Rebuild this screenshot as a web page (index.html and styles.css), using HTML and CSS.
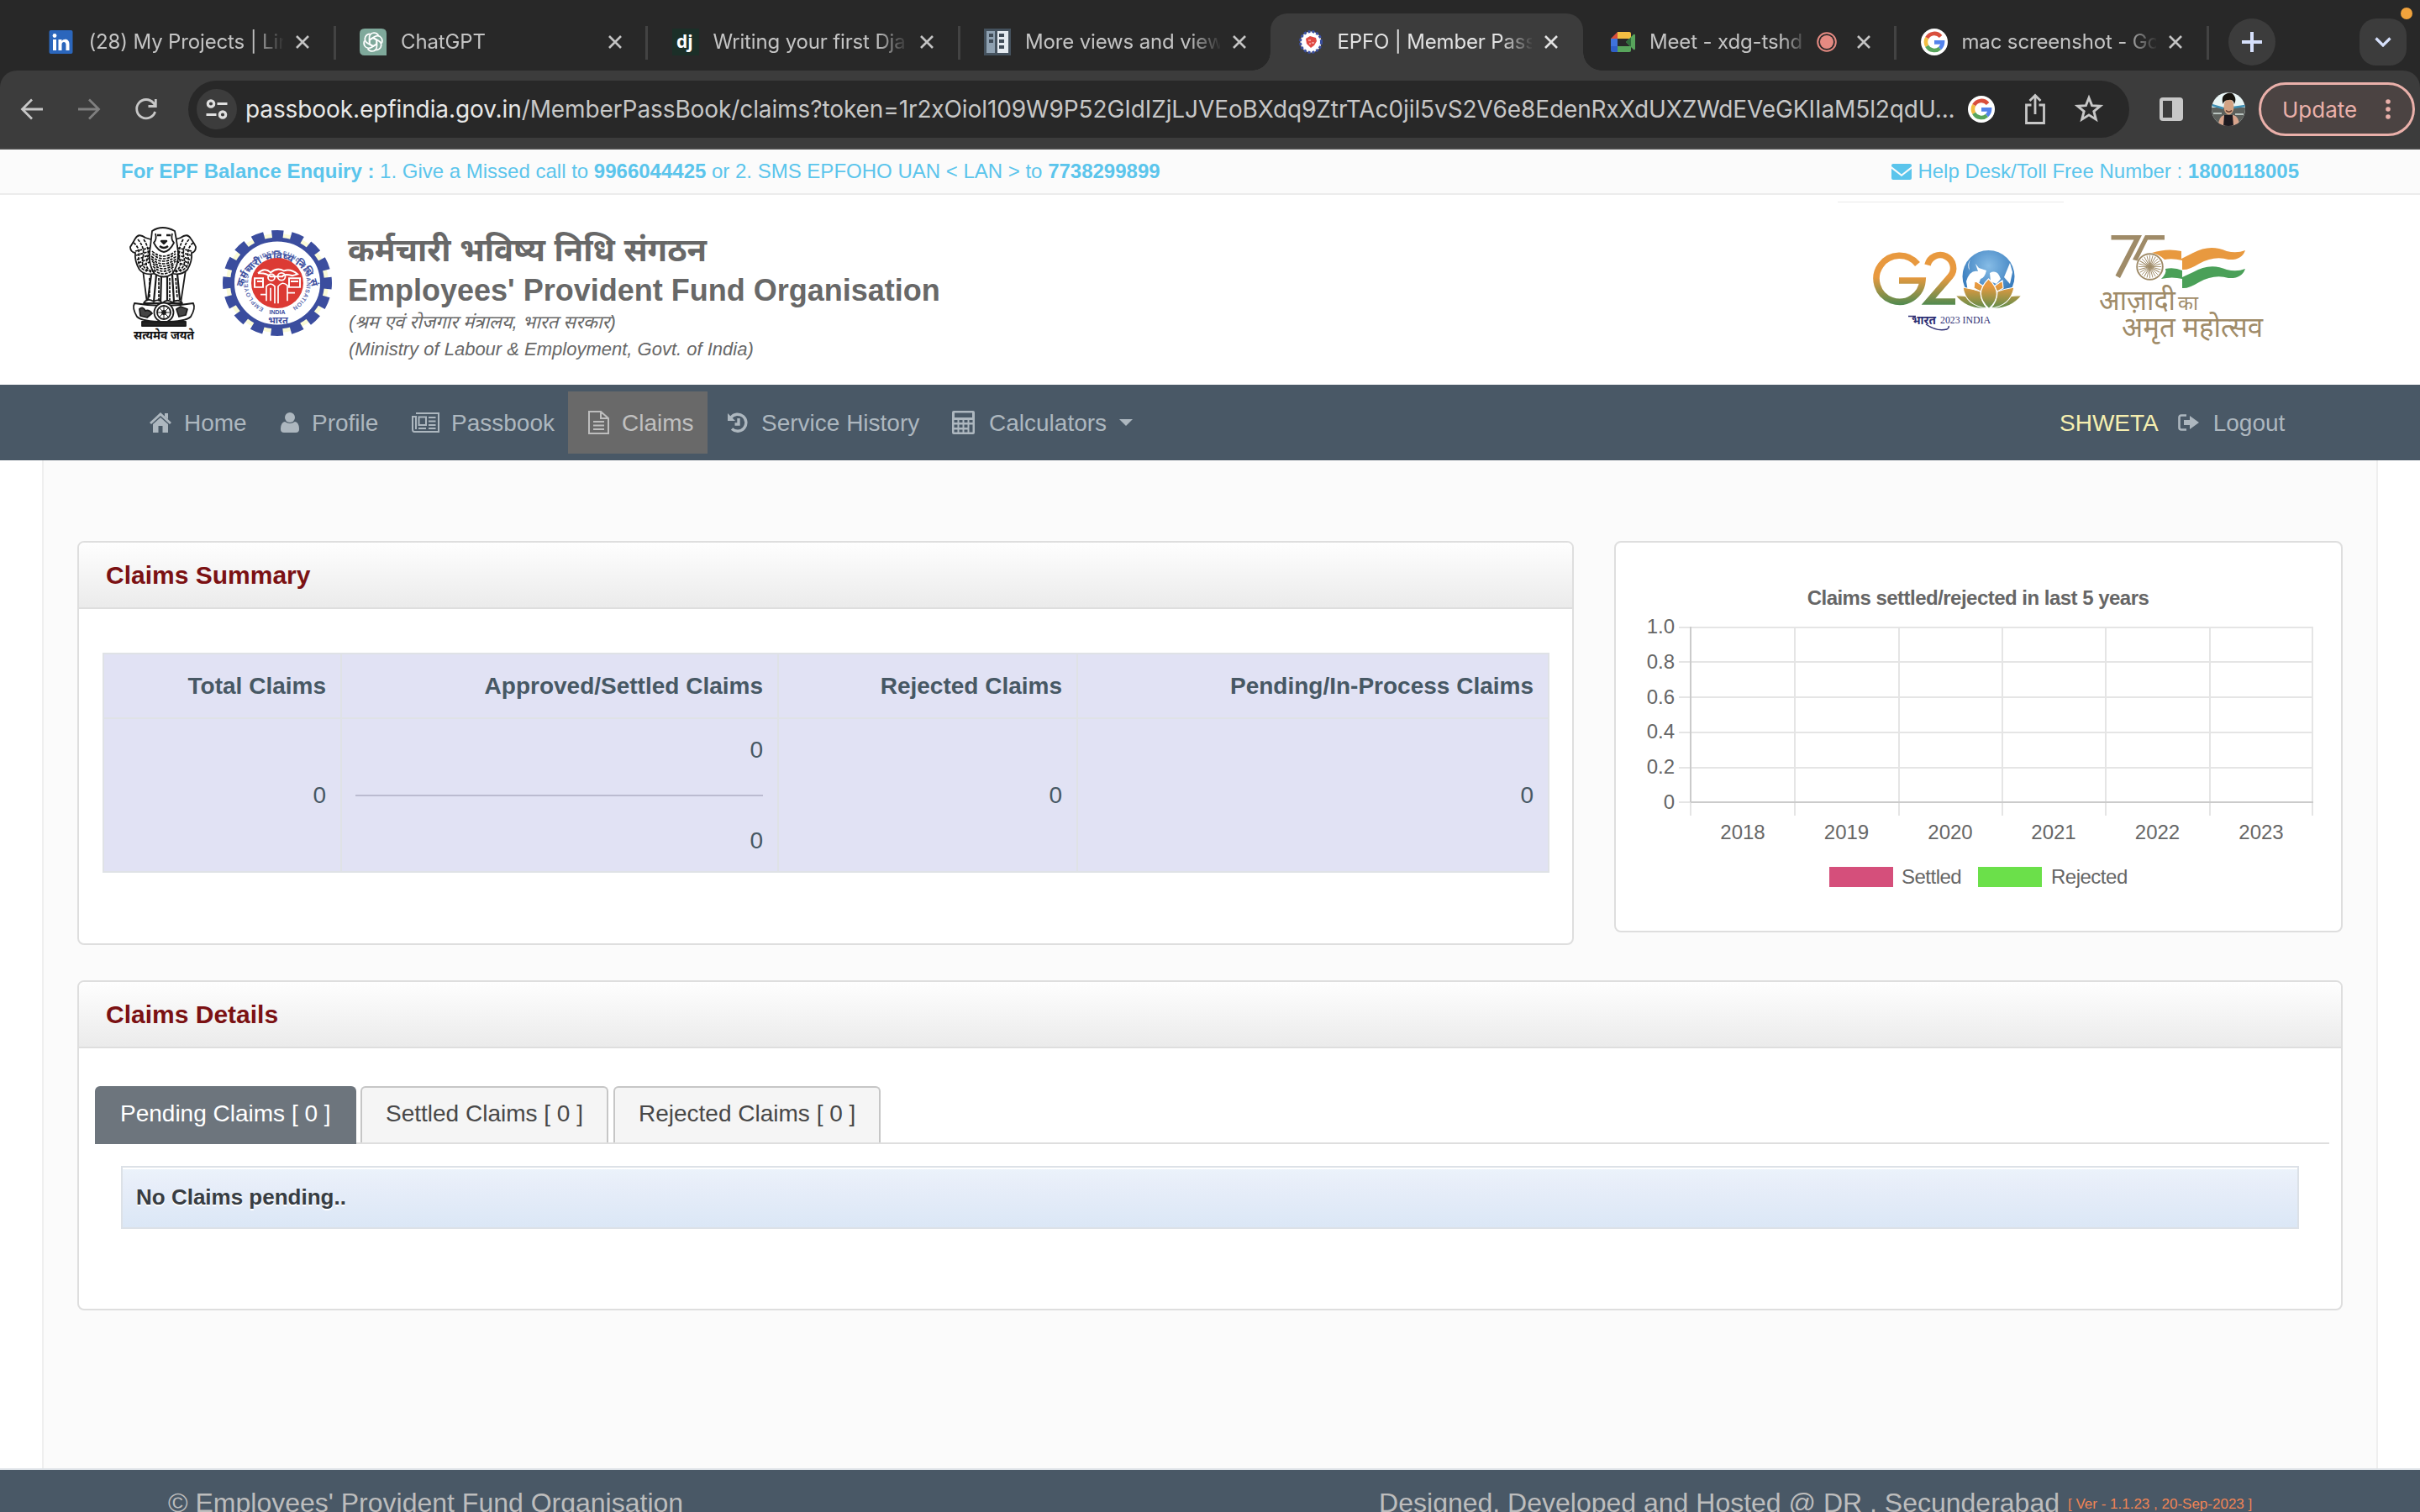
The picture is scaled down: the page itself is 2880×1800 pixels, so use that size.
FILE: index.html
```html
<!DOCTYPE html>
<html lang="en">
<head>
<meta charset="utf-8">
<title>EPFO | Member Passbook</title>
<link rel="stylesheet" href="styles.css">
</head>
<body>
<svg width="0" height="0" class="defs">
  <symbol id="close" viewBox="0 0 16 16"><path d="M1 1L15 15M15 1L1 15" stroke="currentColor" stroke-width="2.6" fill="none"/></symbol>
  <symbol id="google" viewBox="0 0 32 32"><circle cx="16" cy="16" r="16" fill="#fff"/><g fill="none" stroke-width="4.6"><path d="M23.6 9.4A10 10 0 0 0 7.2 11.2" stroke="#d94f3d"/><path d="M7.2 11.2A10 10 0 0 0 7.2 20.8" stroke="#f2be42"/><path d="M7.2 20.8A10 10 0 0 0 22.6 23.5" stroke="#58a55c"/><path d="M22.6 23.5A10 10 0 0 0 26 16.4H16" stroke="#5383ec"/></g></symbol>
</svg>

<header class="tabstrip">
  <div class="tab tab-sep">
    <svg class="fav" viewBox="0 0 32 32"><rect x="1.500" y="2" width="28" height="28" rx="2" fill="#2b66bc"/><path d="M6 13h4v13h-4zM12.500 13h4v2c2-3.400 9-3.400 9 3.500V26h-4v-7c0-4-5-4-5 0v7h-4z" fill="#fff"/><circle cx="8" cy="8.500" r="2.400" fill="#fff"/></svg>
    <span class="tab-title"><span>(28) My Projects | Lin</span></span>
    <svg class="x"><use href="#close"/></svg>
  </div>
  <div class="tab tab-sep">
    <svg class="fav" viewBox="0 0 32 32"><path d="M6 0H26Q32 0 32 6V32H6Q0 32 0 26V6Q0 0 6 0z" fill="#7fa99b"/><g fill="none" stroke="#fff" stroke-width="1.700"><path id="petal" d="M16 11.200L20.500 13.800V20.500Q20.500 26.500 15 27Q11.500 27 9.600 24"/><use href="#petal" transform="rotate(60 16 16)"/><use href="#petal" transform="rotate(120 16 16)"/><use href="#petal" transform="rotate(180 16 16)"/><use href="#petal" transform="rotate(240 16 16)"/><use href="#petal" transform="rotate(300 16 16)"/></g></svg>
    <span class="tab-title"><span>ChatGPT</span></span>
    <svg class="x"><use href="#close"/></svg>
  </div>
  <div class="tab tab-sep">
    <svg class="fav" viewBox="0 0 32 32"><rect width="32" height="32" fill="#1b2f28"/><text x="5" y="23" class="dj">dj</text></svg>
    <span class="tab-title"><span>Writing your first Dja</span></span>
    <svg class="x"><use href="#close"/></svg>
  </div>
  <div class="tab">
    <svg class="fav" viewBox="0 0 32 32"><rect width="32" height="32" fill="#45525e"/><rect x="3" y="3" width="10" height="26" fill="#8fa1b1"/><rect x="16" y="3" width="13" height="26" fill="#e4eaf0"/><path d="M6 6h5v4H6zM6 13h5v4H6zM18 6h6v4h-6zM18 13h6v4h-6zM18 20h6v4h-6z" fill="#3f4b57"/></svg>
    <span class="tab-title"><span>More views and view</span></span>
    <svg class="x"><use href="#close"/></svg>
  </div>
  <div class="tab tab-active">
    <svg class="fav" viewBox="-1 0 32 32"><circle cx="16" cy="16" r="12.500" fill="#fff" stroke="#3b4fa0" stroke-width="3" stroke-dasharray="3 2"/><path d="M10 12L15 9L22 11L23 15L20 20L16 23L11 18z" fill="#e04a44"/><path d="M13 14h3M17 17h3M14 18h2" stroke="#f7b4b0" stroke-width="1.500"/></svg>
    <span class="tab-title"><span>EPFO | Member Pass</span></span>
    <svg class="x"><use href="#close"/></svg>
  </div>
  <div class="tab tab-sep">
    <svg class="fav" viewBox="-3 0 32 32"><path d="M0 12L8 4V12z" fill="#d94f3d"/><path d="M8 4H22Q24 4 24 6V12H8z" fill="#f2be42"/><path d="M0 12H8V21H0z" fill="#3f73dc"/><path d="M0 21H8V28H2Q0 28 0 26z" fill="#2f5fc8"/><path d="M8 21H24V26Q24 28 22 28H8z" fill="#58a55c"/><path d="M18 16L27 7Q29 6 29 8V24Q29 26 27 25z" fill="#58a55c"/><path d="M18 16L24 10.500V21.500z" fill="#2f6b3b"/></svg>
    <span class="tab-title"><span>Meet - xdg-tshd</span></span>
    <svg class="rec" viewBox="0 0 24 24"><circle cx="12" cy="12" r="10.800" fill="none" stroke="#e58a82" stroke-width="2"/><circle cx="12" cy="12" r="8" fill="#e58a82"/></svg>
    <svg class="x"><use href="#close"/></svg>
  </div>
  <div class="tab tab-sep">
    <svg class="fav"><use href="#google"/></svg>
    <span class="tab-title"><span>mac screenshot - Go</span></span>
    <svg class="x"><use href="#close"/></svg>
  </div>
  <div class="newtab"><svg viewBox="0 0 24 24"><path d="M12 0V24M0 12H24" stroke="#d6e0fb" stroke-width="4"/></svg></div>
  <div class="tabsearch"><svg viewBox="0 0 20 12"><path d="M1.500 1.500L10 10L18.500 1.500" fill="none" stroke="#d6e0fb" stroke-width="3.200"/></svg></div>
  <i class="mic-dot"></i>
</header>

<div class="toolbar-bg">
<div class="toolbar">
  <div class="navbtns">
    <svg viewBox="0 0 28 28"><path d="M14 2.500L2.500 14L14 25.500M3 14H27" fill="none" stroke="#c7c7c7" stroke-width="2.800"/></svg>
    <svg viewBox="0 0 28 28"><path d="M14 2.500L25.500 14L14 25.500M1 14H25" fill="none" stroke="#7f7f7f" stroke-width="2.800"/></svg>
    <svg viewBox="0 0 28 28"><path d="M24.600 17A11.200 11.200 0 1 1 22.500 6.500L25 9.500M25.300 2V10.500H16.500" fill="none" stroke="#c7c7c7" stroke-width="2.800"/></svg>
  </div>
  <div class="omnibox">
    <span class="site"><svg viewBox="0 0 26 24"><g fill="none" stroke="#dfdfdf" stroke-width="3.200"><circle cx="6" cy="5.500" r="3.700"/><path d="M13.500 5.500H25.500M0.500 18.500H12.500"/><circle cx="20" cy="18.500" r="3.700"/></g></svg></span>
    <span class="url"><b>passbook.epfindia.gov.in</b><span>/MemberPassBook/claims?token=1r2xOiol109W9P52GIdIZjLJVEoBXdq9ZtrTAc0jil5vS2V6e8EdenRxXdUXZWdEVeGKIIaM5l2qdU...</span></span>
    <svg class="og"><use href="#google"/></svg>
    <svg class="share" viewBox="0 0 26 38"><path d="M8.500 14H2.500V35.500H23.500V14H17.500M13 25V3M6.500 9L13 2.500L19.500 9" fill="none" stroke="#c7c7c7" stroke-width="2.800"/></svg>
    <svg class="star" viewBox="0 0 32 32"><path d="M16 4L19.200 12.100L28 12.700L21.200 18.300L23.400 26.800L16 22.100L8.600 26.800L10.800 18.300L4 12.700L12.800 12.100z" fill="none" stroke="#c7c7c7" stroke-width="2.600"/></svg>
  </div>
  <svg class="panel" viewBox="0 0 28 28"><rect width="28" height="28" rx="4" fill="#c7c7c7"/><rect x="4" y="4" width="11" height="20" fill="#3c3c3c"/></svg>
  <svg class="avatar" viewBox="0 0 40 40"><clipPath id="av"><circle cx="20" cy="20" r="20"/></clipPath><g clip-path="url(#av)"><rect width="40" height="40" fill="#e9f5f5"/><rect y="18" width="40" height="22" fill="#5c605c"/><path d="M0 15L14 19M26 18L40 16" stroke="#3d8fb4" stroke-width="2.500"/><path d="M2 25H12M28 26H38" stroke="#b9c4c0" stroke-width="2"/><path d="M8 40Q8 29 15 27H26Q33 29 33 40z" fill="#d8a48c"/><path d="M15 27H25L26 40H14z" fill="#1d1a20"/><ellipse cx="20.500" cy="17" rx="6" ry="9.500" fill="#d3a384"/><path d="M13.500 14Q11 4 17 2Q24-2 27.500 5Q29.500 9 27 14Q26 8 20 9Q15 9 13.500 14z" fill="#17140f"/><path d="M17 21.500Q20.500 25 24 21.500" stroke="#5b3a30" stroke-width="1.500" fill="none"/></g></svg>
  <div class="update"><span>Update</span><svg viewBox="0 0 6 24"><circle cx="3" cy="3" r="2.800"/><circle cx="3" cy="12" r="2.800"/><circle cx="3" cy="21" r="2.800"/></svg></div>
</div>
</div>

<div class="infobar">
  <div class="enquiry"><b>For EPF Balance Enquiry :</b> 1. Give a Missed call to <b>9966044425</b> or 2. SMS EPFOHO UAN &lt; LAN &gt; to <b>7738299899</b></div>
  <div class="helpdesk"><svg viewBox="0 0 24 19"><path d="M2 0H22Q24 0 24 2V3L12 12.500L0 3V2Q0 0 2 0zM0 5.800L12 15L24 5.800V17Q24 19 22 19H2Q0 19 0 17z" fill="#5bc5ec"/></svg><span>Help Desk/Toll Free Number : <b>1800118005</b></span></div>
</div>

<div class="brand">
  <svg class="emblem" viewBox="0 0 84 138">
    <g fill="#fff" stroke="#1a1a1a" stroke-width="1.800" stroke-linejoin="round">
      <path d="M17 52L22 92H62L68 52z" fill="#fff"/>
      <path d="M20 14Q12 8 8 15Q4 22 2 25Q2 31 8 32Q7 42 13 52Q20 60 33 56V18z"/>
      <path d="M62 14Q70 8 74 15Q79 22 80 25Q80 31 75 32Q76 42 70 52Q62 60 50 56V18z"/>
      <path d="M28 6Q40-2 55 6Q57 16 58 24Q62 44 52 57Q42 64 31 57Q22 44 26 24z"/>
      <path d="M32 9Q34 16 30 20Q35 30 42 31Q49 30 54 20Q50 16 52 9"/>
      <path d="M34 11H39M45 11H50M39 18H45L42 21zM37 24Q42 28 47 24" stroke-width="2.400"/>
      <path d="M27 58L23 88M33 58L30 90M39 60L38 92M46 60L46 92M52 58L54 90M58 57L61 88" fill="none" stroke-width="2.200"/>
      <path d="M18 92Q22 85 30 90Q36 86 40 92Q46 86 52 91Q60 86 64 92z"/>
      <path d="M7 92Q42 98 77 92Q80 98 74 108Q68 114 42 114Q16 114 10 108Q4 98 7 92z"/>
      <circle cx="42" cy="103" r="11.500"/><circle cx="42" cy="103" r="8"/><circle cx="42" cy="103" r="2" fill="#1a1a1a"/>
      <path d="M42 95V111M34 103H50M36.300 97.300L47.700 108.700M47.700 97.300L36.300 108.700" stroke-width="1"/>
      <path d="M13 99Q17 95 20 101Q24 99 28 104L22 109L14 107zM57 99L62 96L70 99L68 106L60 108z" fill="#444"/>
      <rect x="16" y="114" width="52" height="5" fill="#222"/>
    </g>
    <g fill="none" stroke="#111" stroke-width="1.700" stroke-dasharray="3.500 1.300">
      <path d="M6 20Q14 26 12 38T22 54M11 16Q20 26 17 38T27 55M18 16Q26 28 22 40T31 55M77 20Q69 26 71 38T61 54M72 16Q63 26 66 38T56 55M65 16Q58 28 61 40T52 55"/>
      <path d="M28 30Q41 42 56 30M27 36Q41 48 57 36M28 42Q41 54 56 42M29 48Q41 60 54 48M8 30L26 26M10 40L26 34M14 48L27 42M58 26L75 30M58 34L73 40M57 42L69 48"/>
      <path d="M28 33Q41 45 56 33M27 39Q41 51 57 39M29 45Q41 57 55 45M9 35L26 30M12 44L26 38M58 30L74 35M58 38L71 44M30 52Q41 62 53 52M25 62V86M36 62V88M49 62V88M56 62L58 86"/>
    </g>
    <text x="42" y="134.500" text-anchor="middle" class="satya" textLength="72" lengthAdjust="spacingAndGlyphs">सत्यमेव जयते</text>
  </svg>
  <svg class="epfo" viewBox="-66 -65 132 130" preserveAspectRatio="none">
    <circle r="61" fill="#fbfbd8"/>
    <circle r="59" fill="none" stroke="#3b4d9e" stroke-width="12" stroke-dasharray="14 9.170" stroke-dashoffset="7" transform="rotate(-90)"/>
    <circle r="53.500" fill="#fff" stroke="#3b4d9e" stroke-width="5"/>
    <defs><path id="ring1" d="M-41 6A41.500 41.500 0 0 1 41 6"/><path id="ring2" d="M-15 31.500A35 35 0 1 1 15 31.500"/></defs>
    <text class="r1"><textPath href="#ring1" textLength="138" startOffset="1">कर्मचारी भविष्य निधि संगठन</textPath></text>
    <text class="r2"><textPath href="#ring2" textLength="184" startOffset="1">EMPLOYEES PROVIDENT FUND ORGANISATION</textPath></text>
    <circle r="31" fill="#dc3a34"/>
    <path d="M-27-6H-17V5H-27zM14-6H27V5H14zM-24-2H-18M16-2H25M-23-12Q-15-20-8-13Q0-20 8-15Q16-18 24-11L18-9Q8-12 6-8H-8Q-14-13-23-12" fill="none" stroke="#fff" stroke-width="2"/>
    <circle cx="-7" cy="-7" r="4" fill="none" stroke="#fff" stroke-width="1.800"/><circle cx="5" cy="-8" r="4.500" fill="none" stroke="#fff" stroke-width="1.800"/>
    <path d="M-13 22V4Q-8-2-3 4V25M1 25V4Q6-3 12 3V22M-20 14H-13M12 12H21M-8 6V22" fill="none" stroke="#fff" stroke-width="1.700"/>
    <text class="r3" x="0" y="38" text-anchor="middle">INDIA</text><text class="r4" x="1" y="49.500" text-anchor="middle">भारत</text>
  </svg>
  <div class="names">
    <div class="n1"><span>कर्मचारी भविष्य निधि संगठन</span></div>
    <div class="n2"><span>Employees' Provident Fund Organisation</span></div>
    <div class="n3"><span>(श्रम एवं रोजगार मंत्रालय, भारत सरकार)</span></div>
    <div class="n4"><span>(Ministry of Labour &amp; Employment, Govt. of India)</span></div>
  </div>
  <svg class="g20" viewBox="2187 232 270 226">
    <defs>
      <linearGradient id="gg" x1="0" y1="302" x2="0" y2="364" gradientUnits="userSpaceOnUse"><stop offset=".45" stop-color="#e8993f"/><stop offset="1" stop-color="#4b8a50"/></linearGradient>
      <linearGradient id="lg" x1="0" y1="334" x2="0" y2="367" gradientUnits="userSpaceOnUse"><stop offset=".2" stop-color="#e8993f"/><stop offset="1" stop-color="#5f8e4c"/></linearGradient>
      <radialGradient id="globe" cx=".5" cy=".3" r=".65"><stop offset="0" stop-color="#86bce6"/><stop offset="1" stop-color="#2f74b8"/></radialGradient>
    </defs>
    <path d="M2187 240.500H2456" stroke="#e9e9e9"/>
    <g fill="none" stroke="url(#gg)" stroke-width="7.600">
      <path d="M2282 314.500A27.500 27.500 0 1 0 2288 334H2260"/>
      <path d="M2294 315.500A15.500 15.500 0 1 1 2321 329L2295 359H2327"/>
    </g>
    <circle cx="2366.500" cy="329" r="31" fill="url(#globe)"/>
    <path d="M2340 335Q2344 321 2354 323L2351 314L2355 319L2364 322Q2362 331 2357 332L2352 346L2342 347zM2368 325Q2377 320 2381 332L2376 338L2369 335zM2385 330L2392 313L2395 324L2392 338zM2345 309Q2342 314 2344 322Q2340 315 2345 309z" fill="#fff"/>
    <g fill="url(#lg)" stroke="#fff" stroke-width="1.200">
      <path d="M2327 352Q2350 350 2366 367Q2342 370 2327 352zM2406 352Q2383 350 2367 367Q2391 370 2406 352z"/>
      <path d="M2350 334L2361 341L2357 347L2349 343zM2383 334L2373 341L2377 347L2384 343z"/>
      <path d="M2336 342Q2348 344 2357 347Q2357 358 2365 367Q2339 364 2336 342zM2397 342Q2386 344 2377 347Q2377 358 2369 367Q2393 364 2397 342z"/>
      <path d="M2366.500 332Q2386 350 2367 367.500Q2348 350 2366.500 332z"/>
    </g>
    <g fill="#2f2f74"><text class="bh" x="2275" y="386" textLength="29" lengthAdjust="spacingAndGlyphs">भारत</text><text class="yr" x="2309" y="385" textLength="60" lengthAdjust="spacingAndGlyphs">2023 INDIA</text></g>
    <path d="M2271 376.500H2280M2292 386Q2305 395 2317 392Q2320 390 2319 388" fill="none" stroke="#2f2f74" stroke-width="1.500"/>
  </svg>
  <svg class="azadi" viewBox="2490 232 210 226">
    <path d="M2512.500 280H2549L2523 331L2517.500 328L2539.500 285.500H2512.500zM2553 280H2576V285.500H2556L2543.500 310.500L2538 309z" fill="#9f8b68"/>
    <path d="M2561 301Q2579 295 2596 299V308L2610 301Q2630 290 2650 299Q2662 302 2672 298Q2668 310 2652 309Q2635 304 2617 314Q2604 322 2597 321V310Q2585 307 2576 309Q2570 303 2561 301z" fill="#e8993f"/>
    <path d="M2572 332Q2579 325 2577 320Q2588 318 2597 322V330L2610 324Q2630 312 2650 321Q2662 324 2672 320Q2668 332 2652 331Q2635 326 2617 336Q2604 344 2597 343V332Q2585 329 2572 332z" fill="#4aa058"/>
    <circle cx="2558.500" cy="317.500" r="15.300" fill="#fff" stroke="#9f8b68" stroke-width="1.900"/>
    <g stroke="#9f8b68" stroke-width=".9"><path id="sp" d="M2558.500 304V331M2545 317.500H2572M2549 308L2568 327M2568 308L2549 327"/><use href="#sp" transform="rotate(15 2558.500 317.500)"/><use href="#sp" transform="rotate(30 2558.500 317.500)"/></g>
    <g fill="#9f8b68" class="az"><text x="2498" y="369" textLength="91" lengthAdjust="spacingAndGlyphs" class="a1">आज़ादी</text><text x="2592" y="369" textLength="24" lengthAdjust="spacingAndGlyphs" class="a2">का</text><text x="2525" y="401" textLength="168" lengthAdjust="spacingAndGlyphs" class="a1">अमृत महोत्सव</text></g>
  </svg>
</div>

<nav class="mainnav">
  <a class="home"><svg width="26" height="24" viewBox="0 0 26 24"><path d="M13 0L26 12L24 14L13 4L2 14L0 12L5 7.500L13 0zM18 1H22V8L18 4.500zM4 14L13 6L22 14V24H15.500V16H10.500V24H4z"/></svg><span>Home</span></a>
  <a class="profile"><svg width="22" height="24" viewBox="0 0 22 24"><circle cx="11" cy="6" r="6"/><path d="M5 11Q11 15 17 11Q22 12 22 20Q22 24 18 24H4Q0 24 0 20Q0 12 5 11z"/></svg><span>Profile</span></a>
  <a class="passbook"><svg width="33" height="24" viewBox="0 0 33 24"><path d="M5 1H32V23H3Q1 23 1 20V5H5V20M8.500 5.500H17V15H8.500zM20 6H28.500M20 10.500H28.500M20 15H28.500M8 19H17M20 19H28.500" fill="none" stroke="#adb7bf" stroke-width="2"/></svg><span>Passbook</span></a>
  <a class="claims active"><svg width="25" height="28" viewBox="0 0 25 28"><path d="M1 1H15L24 9V27H1zM15 1V9H24M6 13H19M6 17.500H19M6 22H19" fill="none" stroke="#bdbdbd" stroke-width="2"/></svg><span>Claims</span></a>
  <a class="service"><svg width="25" height="25" viewBox="0 0 25 25"><path d="M4 6A10 10 0 1 1 5 19.500M13 7V14H8.500" fill="none" stroke="#adb7bf" stroke-width="3.400"/><path d="M0 1V10H9z"/></svg><span>Service History</span></a>
  <a class="calc"><svg width="27" height="28" viewBox="0 0 27 28"><path fill-rule="evenodd" d="M2 0H25Q27 0 27 2V26Q27 28 25 28H2Q0 28 0 26V2Q0 0 2 0zM3 2.500V8H24V2.500zM2.500 11V14H6.500V11zM8.500 11V14H12.500V11zM14.500 11V14H18.500V11zM20.500 11V14H24.500V11zM2.500 16.500V20H6.500V16.500zM8.500 16.500V20H12.500V16.500zM14.500 16.500V20H18.500V16.500zM20.500 16.500V25.500H24.500V16.500zM2.500 22.500V25.500H6.500V22.500zM8.500 22.500V25.500H12.500V22.500zM14.500 22.500V25.500H18.500V22.500z"/></svg><span>Calculators</span><i class="caret"></i></a>
  <span class="user">SHWETA</span>
  <a class="logout"><svg width="25" height="20" viewBox="0 0 25 20"><path d="M10 1.500H4Q1.500 1.500 1.500 4V16Q1.500 18.500 4 18.500H10" fill="none" stroke="#adb7bf" stroke-width="2.600"/><path d="M7 7H14V2L25 10L14 18V13H7z"/></svg><span>Logout</span></a>
</nav>

<main class="page">
  <div class="row">
    <section class="card summary">
      <h2><span>Claims Summary</span></h2>
      <table>
        <colgroup><col class="c1"><col class="c2"><col class="c3"><col class="c4"></colgroup>
        <tr class="head"><th><span>Total Claims</span></th><th><span>Approved/Settled Claims</span></th><th><span>Rejected Claims</span></th><th><span>Pending/In-Process Claims</span></th></tr>
        <tr class="vals"><td>0</td><td><div>0</div><hr><div>0</div></td><td>0</td><td>0</td></tr>
      </table>
    </section>
    <section class="card chart">
      <svg viewBox="-1 0 863 462">
        <g fill="none" stroke="#e5e5e5" stroke-width="2">
          <path d="M74 101H829M74 142H829M74 184H829M74 226H829M74 268H829M74 309H88"/>
          <path d="M88 310V325M212 100V325M336 100V325M459 100V325M582 100V325M706 100V325M828 100V325"/>
        </g>
        <path d="M88 100V309M88 309H829" fill="none" stroke="#cbcbcb" stroke-width="2"/>
        <g class="lab">
          <text x="430" y="73.500" text-anchor="middle" class="ct">Claims settled/rejected in last 5 years</text>
          <g text-anchor="end"><text x="69" y="108">1.0</text><text x="69" y="150">0.8</text><text x="69" y="192">0.6</text><text x="69" y="233">0.4</text><text x="69" y="275">0.2</text><text x="69" y="317">0</text></g>
          <g text-anchor="middle"><text x="150" y="352.500">2018</text><text x="273.500" y="352.500">2019</text><text x="397" y="352.500">2020</text><text x="520" y="352.500">2021</text><text x="643.500" y="352.500">2022</text><text x="767" y="352.500">2023</text></g>
          <text x="339" y="405.500" class="lg">Settled</text><text x="517" y="405.500" class="lg">Rejected</text>
        </g>
        <rect x="253" y="386" width="76" height="24" fill="#d54f7b"/><rect x="430" y="386" width="76" height="24" fill="#6be04a"/>
      </svg>
    </section>
  </div>
  <section class="card details">
    <h2><span>Claims Details</span></h2>
    <div class="pills"><a class="on"><span>Pending Claims [ 0 ]</span></a><a><span>Settled Claims [ 0 ]</span></a><a><span>Rejected Claims [ 0 ]</span></a></div>
    <div class="notice"><span>No Claims pending..</span></div>
  </section>
</main>

<footer class="foot"><span class="copy">© Employees' Provident Fund Organisation</span><span class="dev">Designed, Developed and Hosted @ DR , Secunderabad</span><span class="ver">[ Ver - 1.1.23 , 20-Sep-2023 ]</span></footer>
</body>
</html>
```
FILE: styles.css
```css
* { box-sizing: border-box; }
body { margin: 0; width: 2880px; height: 1800px; overflow: hidden; background: #fff; font-family: "Liberation Sans", "Noto Sans Devanagari", "Noto Sans", sans-serif; display: flex; flex-direction: column; }
body > * { flex: none; }
.defs { position: absolute; }
svg { display: block; flex: none; }

/* browser tab strip */
.tabstrip { height: 84px; background: #282828; display: flex; align-items: center; padding-top: 16px; padding-left: 26px; position: relative; font-family: Inter, sans-serif; font-size: 24px; letter-spacing: -0.15px; color: #c4c4c4; }
.tab { width: 371.5px; height: 68px; display: flex; align-items: center; position: relative; padding-left: 30.5px; }
.tab-sep::after { content: ""; position: absolute; right: -2px; top: 15px; width: 3px; height: 40px; background: #434343; }
.fav { width: 32px; height: 32px; margin-right: 17px; }
.tab-title { width: 231.5px; overflow: hidden; white-space: nowrap; line-height: 34px; -webkit-mask-image: linear-gradient(90deg, #000 84%, transparent 101%); mask-image: linear-gradient(90deg, #000 84%, transparent 101%); }
.rec { width: 24px; height: 24px; margin-left: -33px; }
.tab:has(.rec) .tab-title { width: 187px; margin-right: 45px; }
.x { width: 16px; height: 16px; margin-left: 15px; }
.rec + .x { margin-left: 24px; }
.tab-active { background: #3c3c3c; border-radius: 20px 20px 0 0; color: #e3e3e3; }
.tab-active::before, .tab-active::after { content: ""; position: absolute; bottom: 0; width: 22px; height: 22px; }
.tab-active::before { left: -22px; background: radial-gradient(circle at 0 0, #282828 21.500px, #3c3c3c 22px); }
.tab-active::after { right: -22px; background: radial-gradient(circle at 100% 0, #282828 21.500px, #3c3c3c 22px); }
.dj { font: bold 21px "Open Sans", sans-serif; fill: #fff; }
.newtab, .tabsearch { width: 56px; height: 56px; border-radius: 28px; background: #3c3c3c; display: flex; align-items: center; justify-content: center; }
.newtab { margin-left: 25px; }
.newtab svg { width: 24px; height: 24px; }
.tabsearch { margin-left: 100px; border-radius: 20px; }
.tabsearch svg { width: 20px; height: 12px; }
.mic-dot { position: absolute; left: 2857px; top: 9px; width: 14px; height: 14px; border-radius: 50%; background: #f2a33c; }

/* browser toolbar */
.toolbar-bg { background: #282828; }
.toolbar { height: 94px; background: #3c3c3c; border-bottom: 2px solid #484848; border-radius: 20px 20px 0 0; display: flex; align-items: center; padding-left: 24px; font-family: Inter, sans-serif; }
.navbtns { display: flex; gap: 40px; width: 200px; }
.navbtns svg { width: 28px; height: 28px; }
.omnibox { width: 2310px; height: 68px; border-radius: 34px; background: #282828; display: flex; align-items: center; padding-left: 10px; }
.site { width: 48px; height: 48px; border-radius: 50%; background: #3c3c3c; display: flex; align-items: center; justify-content: center; }
.site svg { width: 26px; height: 24px; }
.url { margin-left: 10px; width: 2050px; white-space: nowrap; font-size: 28px; letter-spacing: -0.1px; line-height: 40px; color: #c7c7c7; }
.url b { font-weight: 400; color: #e8e8e8; }
.og { width: 32px; height: 32px; }
.share { width: 26px; height: 38px; margin-left: 35px; }
.star { width: 36px; height: 36px; margin-left: 33px; }
.panel { width: 28px; height: 28px; margin-left: 36px; }
.avatar { width: 40px; height: 40px; margin-left: 34px; }
.update { width: 186px; height: 64px; margin-left: 16px; border: 3px solid #eab0aa; border-radius: 32px; background: #4b4342; color: #eab0aa; font-size: 26px; display: flex; align-items: center; padding-left: 25px; line-height: 34px; }
.update span { width: 123px; padding-top: 1px; }
.update svg { width: 6px; height: 24px; fill: #eab0aa; }

/* enquiry strip */
.infobar { height: 54px; background: #fbfbfb; border-bottom: 2px solid #ececec; display: flex; justify-content: space-between; align-items: center; padding: 0 144px; font-size: 24px; line-height: 30px; color: #5bc5ec; white-space: nowrap; }
.helpdesk { display: flex; align-items: center; gap: 7px; }
.helpdesk svg { width: 24px; height: 19px; }

/* organisation header */
.brand { height: 226px; display: flex; color: #686868; }
.emblem { width: 84px; height: 138px; margin: 37px 0 0 153px; }
.epfo { width: 132px; height: 126px; margin: 42px 0 0 27px; }
.satya { font: bold 15px "Noto Sans Devanagari", "Noto Sans", sans-serif; fill: #111; }
.r1 { font: bold 12px "Noto Sans Devanagari", "Noto Sans", sans-serif; fill: #3b4d9e; }
.r2 { font: bold 7px "Liberation Sans", sans-serif; fill: #5c6cb0; }
.r3 { font: bold 7px "Liberation Sans", sans-serif; fill: #3b4d9e; }
.r4 { font: bold 11px "Noto Sans Devanagari", "Noto Sans", sans-serif; fill: #3b4d9e; }
.names { margin-left: 18px; padding-top: 34px; width: 1773px; white-space: nowrap; }
.n1 { font-size: 38.200px; font-weight: bold; line-height: 64px; height: 60px; }
.n2 { font-size: 36px; font-weight: bold; line-height: 40px; height: 40px; }
.n3 { font-size: 21.900px; font-style: italic; line-height: 36px; height: 34px; padding-left: 1px; }
.n4 { font-size: 22px; font-style: italic; line-height: 32px; height: 32px; padding-left: 1px; }
.g20 { width: 270px; height: 226px; }
.azadi { width: 210px; height: 226px; margin-left: 33px; }
.bh { font: bold 15px "Noto Sans Devanagari", sans-serif; }
.yr { font: 12.500px "Liberation Serif", serif; }
.az { font-family: "Noto Sans Devanagari", sans-serif; }
.a1 { font-size: 34px; }
.a2 { font-size: 24px; }

/* main navigation */
.mainnav { height: 90px; background: #495866; display: flex; align-items: center; padding-left: 156px; font-size: 28px; line-height: 36px; color: #adb7bf; white-space: nowrap; }
.mainnav a { height: 74px; display: flex; align-items: center; padding-left: 22px; fill: #adb7bf; }
.mainnav a span { margin-left: 15px; padding-top: 1px; }
.mainnav .home { width: 156px; }
.mainnav .profile { width: 156px; }
.mainnav .passbook { width: 208px; }
.mainnav .passbook span { margin-left: 14px; }
.mainnav .active { width: 166px; padding-left: 24px; background: #696969; color: #c0c0c0; }
.mainnav .service { padding-left: 24px; width: 269px; }
.mainnav .calc { width: 260px; }
.mainnav .calc span { margin-left: 17px; }
.caret { margin-left: 15px; border: 8px solid transparent; border-top: 8px solid #adb7bf; border-bottom: 0; }
.mainnav .user { margin-left: 1080px; padding-top: 1px; color: #f6efb0; }
.mainnav .logout { padding-left: 23px; }
.mainnav .logout span { margin-left: 17px; }

/* page body */
.page { width: 2780px; height: 1200px; margin-left: 50px; border: 2px solid #efefef; border-top: 0; border-bottom: 0; background: #fbfbfb; padding: 96px 40px 0; }
.row { display: flex; align-items: flex-start; justify-content: space-between; }
.card { background: #fff; border: 2px solid #dedede; border-radius: 8px; }
.card h2 { margin: 0; height: 79px; border-bottom: 2px solid #dedede; border-radius: 6px 6px 0 0; background: linear-gradient(#fefefe, #ebebeb); color: #7b1113; font-size: 30px; line-height: 77px; padding-left: 32px; }
.summary { width: 1781px; height: 481px; }
.summary table { margin: 52px 0 0 28px; width: 1720px; height: 262px; table-layout: fixed; border-collapse: collapse; background: #e1e2f4; color: #475864; font-size: 28px; line-height: 42px; text-align: right; }
.summary th, .summary td { border: 2px solid #dfe2e6; padding: 0 17px 0 16px; }
.c1 { width: 283px; } .c2 { width: 520px; } .c3 { width: 356px; } .c4 { width: 561px; }
.head { height: 77px; }
.summary hr { border: 0; height: 2px; background: #bbbbd0; margin: 32px 0; }
.chart { width: 867px; height: 466px; }
.chart svg { width: 863px; height: 462px; }
.lab { font-size: 24px; fill: #666; }
.ct { font-weight: bold; letter-spacing: -0.520px; }
.lg { letter-spacing: -0.500px; }
.details { width: 2696px; height: 393px; margin-top: 42px; }
.pills { margin: 45px 14px 0 19px; height: 69px; display: flex; gap: 6px; border-bottom: 2px solid #dedede; font-size: 28px; line-height: 32px; color: #484848; white-space: nowrap; }
.pills a { height: 67px; border: 2px solid #c6c6c6; border-bottom: 0; border-radius: 6px 6px 0 0; background: #f5f5f5; width: 295px; display: flex; align-items: center; padding: 0 0 3px 28px; }
.pills a:last-child { width: 318px; }
.pills .on { width: 311px; height: 69px; margin-right: -1px; padding-bottom: 5px; background: #6d757d; border-color: #6d757d; color: #fff; }
.notice { margin: 26px 0 0 50px; width: 2592px; height: 75px; border: 2px solid #dce1e7; background: linear-gradient(#ebf3fb, #e8eef9 25%, #dbe7f6); box-shadow: inset 0 2px 0 #fff; font-size: 26px; font-weight: bold; line-height: 71px; color: #373d43; padding-left: 16px; text-shadow: 0 2px 0 #fff; }

/* footer */
.foot { height: 80px; background: #495866; border-top: 2px solid #dde2e7; display: flex; align-items: center; padding-left: 200px; font-size: 32px; color: #bdbdbd; white-space: nowrap; }
.foot .dev { margin-left: 828px; }
.foot .ver { margin-left: 10px; padding-top: 3px; font-size: 17px; color: #f08455; }
```
